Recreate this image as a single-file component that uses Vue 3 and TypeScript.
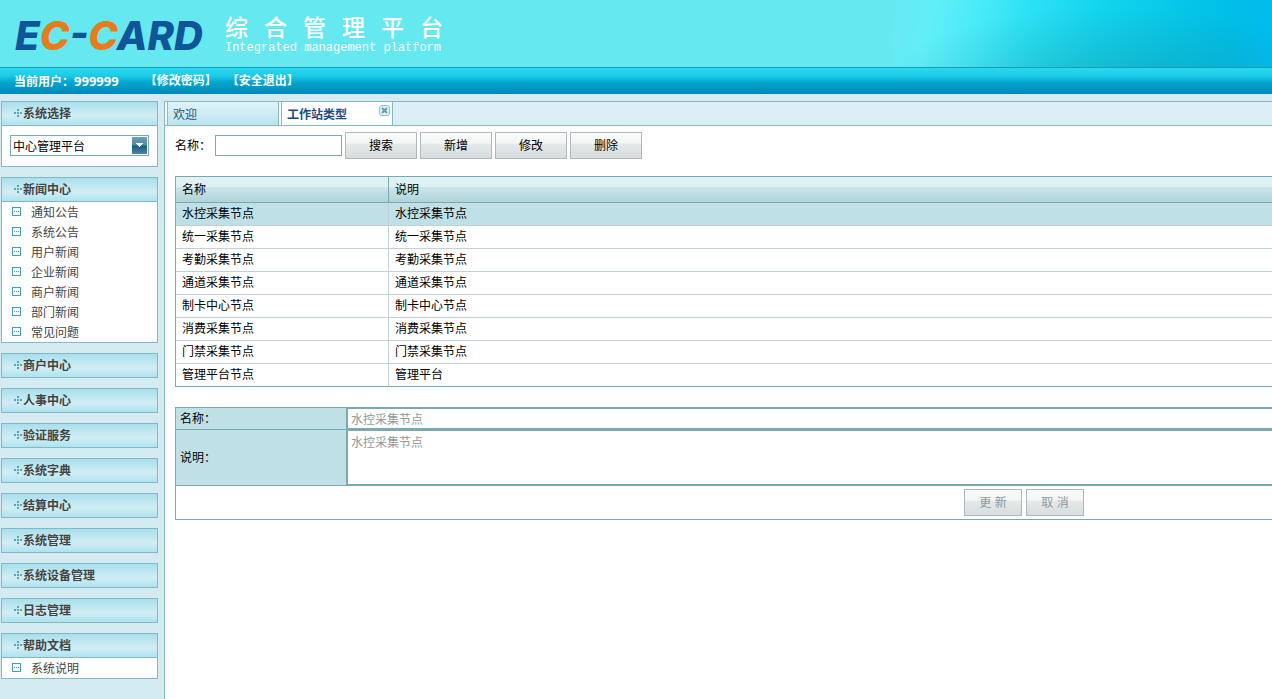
<script setup lang="ts">
import { ref } from 'vue'

interface Section {
  title: string
  items: string[]
}

interface Station {
  name: string
  note: string
}

const platformTitle = ['综', '合', '管', '理', '平', '台']
const system = ref('中心管理平台')
const keyword = ref('')
const selected = ref(0)

const sections: Section[] = [
  { title: '新闻中心', items: ['通知公告', '系统公告', '用户新闻', '企业新闻', '商户新闻', '部门新闻', '常见问题'] },
  { title: '商户中心', items: [] },
  { title: '人事中心', items: [] },
  { title: '验证服务', items: [] },
  { title: '系统字典', items: [] },
  { title: '结算中心', items: [] },
  { title: '系统管理', items: [] },
  { title: '系统设备管理', items: [] },
  { title: '日志管理', items: [] },
  { title: '帮助文档', items: ['系统说明'] },
]

const stations: Station[] = [
  { name: '水控采集节点', note: '水控采集节点' },
  { name: '统一采集节点', note: '统一采集节点' },
  { name: '考勤采集节点', note: '考勤采集节点' },
  { name: '通道采集节点', note: '通道采集节点' },
  { name: '制卡中心节点', note: '制卡中心节点' },
  { name: '消费采集节点', note: '消费采集节点' },
  { name: '门禁采集节点', note: '门禁采集节点' },
  { name: '管理平台节点', note: '管理平台' },
]

const actions = ['搜索', '新增', '修改', '删除']
</script>

<template>
  <div class="page" lang="zh-CN">
    <header class="banner">
      <div class="logo">E<span>C</span>-<span>C</span>ARD</div>
      <div class="platform">
        <h1><span v-for="c in platformTitle" :key="c">{{ c }}</span></h1>
        <p>Integrated management platform</p>
      </div>
    </header>

    <nav class="userbar">
      <span>当前用户：<b class="uid">999999</b></span>
      <a class="first" href="#">【修改密码】</a>
      <a href="#">【安全退出】</a>
    </nav>

    <div class="body">
      <aside class="side">
        <section class="panel">
          <h2>
            <svg width="9" height="9" viewBox="0 0 9 9" fill="#5aa3b8" shape-rendering="crispEdges">
              <path d="M3 0h2v2h-2zM0 3h2v2h-2zM3 3h2v2h-2zM6 3h2v2h-2zM3 6h2v2h-2z" />
            </svg>
            <label for="system">系统选择</label>
          </h2>
          <div class="chooser">
            <div class="select">
              <select id="system" v-model="system">
                <option>中心管理平台</option>
              </select>
              <svg width="15" height="17" viewBox="0 0 15 17" shape-rendering="crispEdges">
                <defs>
                  <linearGradient id="arrow-fill" x1="0" y1="0" x2="0" y2="1">
                    <stop offset="0" stop-color="#6c9fb7" />
                    <stop offset="0.48" stop-color="#4f89a5" />
                    <stop offset="0.52" stop-color="#1b5c7e" />
                    <stop offset="1" stop-color="#4b86a2" />
                  </linearGradient>
                </defs>
                <rect width="15" height="17" fill="url(#arrow-fill)" />
                <path d="M4 6h7v1h-1v1h-1v1h-1v1h-1v-1h-1v-1h-1v-1h-1z" fill="#fff" />
              </svg>
            </div>
          </div>
        </section>

        <section v-for="s in sections" :key="s.title" class="panel">
          <h2>
            <svg width="9" height="9" viewBox="0 0 9 9" fill="#5aa3b8" shape-rendering="crispEdges">
              <path d="M3 0h2v2h-2zM0 3h2v2h-2zM3 3h2v2h-2zM6 3h2v2h-2zM3 6h2v2h-2z" />
            </svg>
            {{ s.title }}
          </h2>
          <ul v-if="s.items.length">
            <li v-for="item in s.items" :key="item">
              <a href="#">
                <svg width="9" height="9" viewBox="0 0 9 9" shape-rendering="crispEdges">
                  <path d="M0 0h9v9h-9zM1 1v7h7v-7z" fill="#4a9cb4" fill-rule="evenodd" />
                  <path d="M2 4h1v1h-1zM4 4h1v1h-1zM6 4h1v1h-1z" fill="#4a9cb4" />
                </svg>
                {{ item }}
              </a>
            </li>
          </ul>
        </section>
      </aside>

      <main class="main">
        <div class="tabs">
          <a class="tab" href="#">欢迎</a>
          <div class="tab active">
            <a href="#">工作站类型</a>
            <button type="button" aria-label="关闭">
              <svg width="11" height="11" viewBox="0 0 11 11">
                <rect x="0.5" y="0.5" width="10" height="10" rx="2.5" fill="#e3f2f6" stroke="#8fc0cf" />
                <path d="M3 3l5 5M8 3l-5 5" stroke="#5b9fb6" stroke-width="2" />
              </svg>
            </button>
          </div>
        </div>

        <div class="content">
          <form class="search" @submit.prevent>
            <label for="keyword">名称：</label>
            <input id="keyword" v-model="keyword" type="text" />
            <button v-for="a in actions" :key="a" class="btn" type="button">{{ a }}</button>
          </form>

          <table class="grid">
            <thead>
              <tr><th class="name">名称</th><th>说明</th></tr>
            </thead>
            <tbody>
              <tr v-for="(s, i) in stations" :key="s.name" :class="{ on: i === selected }" @click="selected = i">
                <td>{{ s.name }}</td>
                <td>{{ s.note }}</td>
              </tr>
            </tbody>
          </table>

          <form class="detail" @submit.prevent>
            <div class="row">
              <label for="name">名称：</label>
              <input id="name" type="text" :value="stations[selected].name" disabled />
            </div>
            <div class="row">
              <label for="note">说明：</label>
              <textarea id="note" :value="stations[selected].note" disabled></textarea>
            </div>
            <div class="foot">
              <button class="btn" type="button" disabled>更 新</button>
              <button class="btn" type="button" disabled>取 消</button>
            </div>
          </form>
        </div>
      </main>
    </div>
  </div>
</template>

<style>
body {
  margin: 0;
  background: #d3ebf1;
}
</style>

<style scoped>
.page {
  display: flex;
  flex-direction: column;
  min-height: 100vh;
  overflow: hidden;
  font: 12px/20px "Liberation Sans", "Noto Sans CJK SC", sans-serif;
  color: #000;
}
.page * {
  box-sizing: border-box;
}
a {
  color: inherit;
  text-decoration: none;
}
svg {
  display: block;
  flex: none;
}
button,
input,
select,
textarea {
  font: inherit;
  color: inherit;
  margin: 0;
}

.banner {
  display: flex;
  align-items: flex-start;
  gap: 22px;
  height: 67px;
  padding: 14px 15px 0;
  background:
    radial-gradient(ellipse 240px 80px at right 150px bottom -20px, rgba(30, 140, 150, 0.42), rgba(30, 140, 150, 0)) no-repeat,
    linear-gradient(100deg, #66e8f1 0, #62eef8 40px, #48eaf8 90px, #2ae0f4 140px, #12d4ee 210px, #05c6e8 290px, #00bee8 340px, #00bdf0 380px) right / 380px 100% no-repeat,
    #66e8f1;
}
.logo {
  font: italic 800 40px/44px Inter, sans-serif;
  color: #0f5597;
}
.logo span {
  color: #e87c1c;
}
.platform {
  color: #fff;
}
.platform h1 {
  display: flex;
  gap: 16px;
  margin: 0;
  font: 500 23px/28px "Liberation Sans", "Noto Sans CJK SC", sans-serif;
}
.platform p {
  margin: 0;
  font: 12px/12px "Liberation Mono", monospace;
}

.userbar {
  display: flex;
  align-items: center;
  height: 27px;
  padding: 0 14px;
  border-top: 1px solid #169bb9;
  background: linear-gradient(#2ad8ee, #1ccbe6 30%, #04a5ce 55%, #0087b9);
  font-weight: bold;
  color: #fff;
}
.uid {
  font: bold 13px/20px "Noto Sans", sans-serif;
}
.userbar a {
  margin-left: 10px;
}
.userbar a.first {
  margin-left: 26px;
}

.body {
  display: flex;
  flex: 1;
  gap: 6px;
  padding-top: 7px;
}
.side {
  display: flex;
  flex-direction: column;
  flex: none;
  gap: 10px;
  width: 158px;
  padding-left: 1px;
  color: #444;
}
.panel {
  border: 1px solid #83b8c5;
  border-bottom: 0;
  background: #fff;
}
.panel h2 {
  display: flex;
  align-items: center;
  height: 24px;
  margin: 0;
  padding-left: 12px;
  border-bottom: 1px solid #83b8c5;
  background: linear-gradient(#a8dfed, #d2edf4 60%, #ade3f0);
  font-size: 12px;
}
.chooser {
  padding: 9px 8px 10px;
  border-bottom: 1px solid #83b8c5;
}
.select {
  position: relative;
}
.select select {
  display: block;
  width: 100%;
  height: 21px;
  padding: 2px 18px 0 2px;
  border: 1px solid #7aaab0;
  border-radius: 0;
  appearance: none;
  background: #fff;
  color: #000;
  line-height: 19px;
}
.select svg {
  position: absolute;
  top: 2px;
  right: 2px;
  pointer-events: none;
}
.panel ul {
  margin: 0;
  padding: 0;
  border-bottom: 1px solid #83b8c5;
  list-style: none;
}
.panel li a {
  display: flex;
  align-items: flex-start;
  gap: 10px;
  height: 20px;
  padding-left: 10px;
  line-height: 22px;
}
.panel li svg {
  margin-top: 5px;
}

.main {
  flex: 1;
  min-width: 0;
  border: solid #83b8c5;
  border-width: 1px 0 0 1px;
  background: #fff;
}
.tabs {
  display: flex;
  height: 24px;
  border-bottom: 1px solid #83b8c5;
  background: linear-gradient(90deg, #fff 228px, #dceff7 228px);
}
.tab {
  display: flex;
  justify-content: space-between;
  width: 112px;
  margin-left: 2px;
  padding: 3px 2px 0 5px;
  border: solid #83b8c5;
  border-width: 0 1px;
  background: linear-gradient(#e0f3f8, #bbe5ef);
  color: #2a5577;
}
.tab.active {
  background: #fff;
  font-weight: bold;
  color: #1d4a85;
}
.tab button {
  align-self: flex-start;
  padding: 0;
  border: 0;
  background: none;
}

.content {
  padding: 6px 0 0 10px;
}
.search {
  display: flex;
  align-items: center;
  gap: 3px;
}
.search label {
  width: 37px;
}
.search input {
  width: 127px;
  height: 21px;
  padding: 0 3px;
  border: 1px solid #7aaab0;
}
.btn {
  width: 72px;
  height: 27px;
  padding: 0;
  border: 1px solid #adb9bb;
  background: linear-gradient(#fafbfb, #f3f6f6 40%, #e3e9e9 45%, #d8dedf);
}

.grid {
  width: 100%;
  margin-top: 17px;
  border: solid #7aaab0;
  border-width: 1px 0 0 1px;
  border-spacing: 0;
  table-layout: fixed;
}
.grid th,
.grid td {
  height: 23px;
  padding: 0 6px;
  border-bottom: 1px solid #c0d1d8;
  line-height: 20px;
  text-align: left;
}
.grid td:first-child {
  border-right: 1px solid #c0d1d8;
}
.grid th {
  height: 26px;
  border-bottom-color: #7aaab0;
  background: linear-gradient(#dff2f4, #dbf1f3 38%, #cbe6e9 42%, #b0d4d9);
  font-weight: normal;
}
.grid .name {
  width: 213px;
  border-right: 1px solid #7aaab0;
}
.grid .on td {
  background: #bfe0e6;
}
.grid tbody tr:last-child td {
  border-bottom-color: #7aaab0;
}

.detail {
  margin-top: 20px;
  border: solid #7aaab0;
  border-width: 1px 0 0 1px;
}
.row {
  display: flex;
  border-bottom: 1px solid #7aaab0;
}
.row label {
  display: flex;
  align-items: center;
  flex: none;
  width: 171px;
  padding-left: 4px;
  border-right: 1px solid #7aaab0;
  background: #bfe0e6;
}
.row input,
.row textarea {
  display: block;
  flex: 1;
  min-width: 0;
  height: 21px;
  padding: 0 3px;
  border: solid #7aaab0;
  border-width: 1px 0 1px 1px;
  border-radius: 0;
  background: #fff;
  color: #90999c;
}
.row textarea {
  height: 55px;
  padding-top: 2px;
  resize: none;
}
.foot {
  display: flex;
  justify-content: flex-end;
  gap: 4px;
  padding: 3px 188px 3px 0;
  border-bottom: 1px solid #7aaab0;
}
.foot .btn {
  width: 58px;
  color: #90999c;
}
</style>
